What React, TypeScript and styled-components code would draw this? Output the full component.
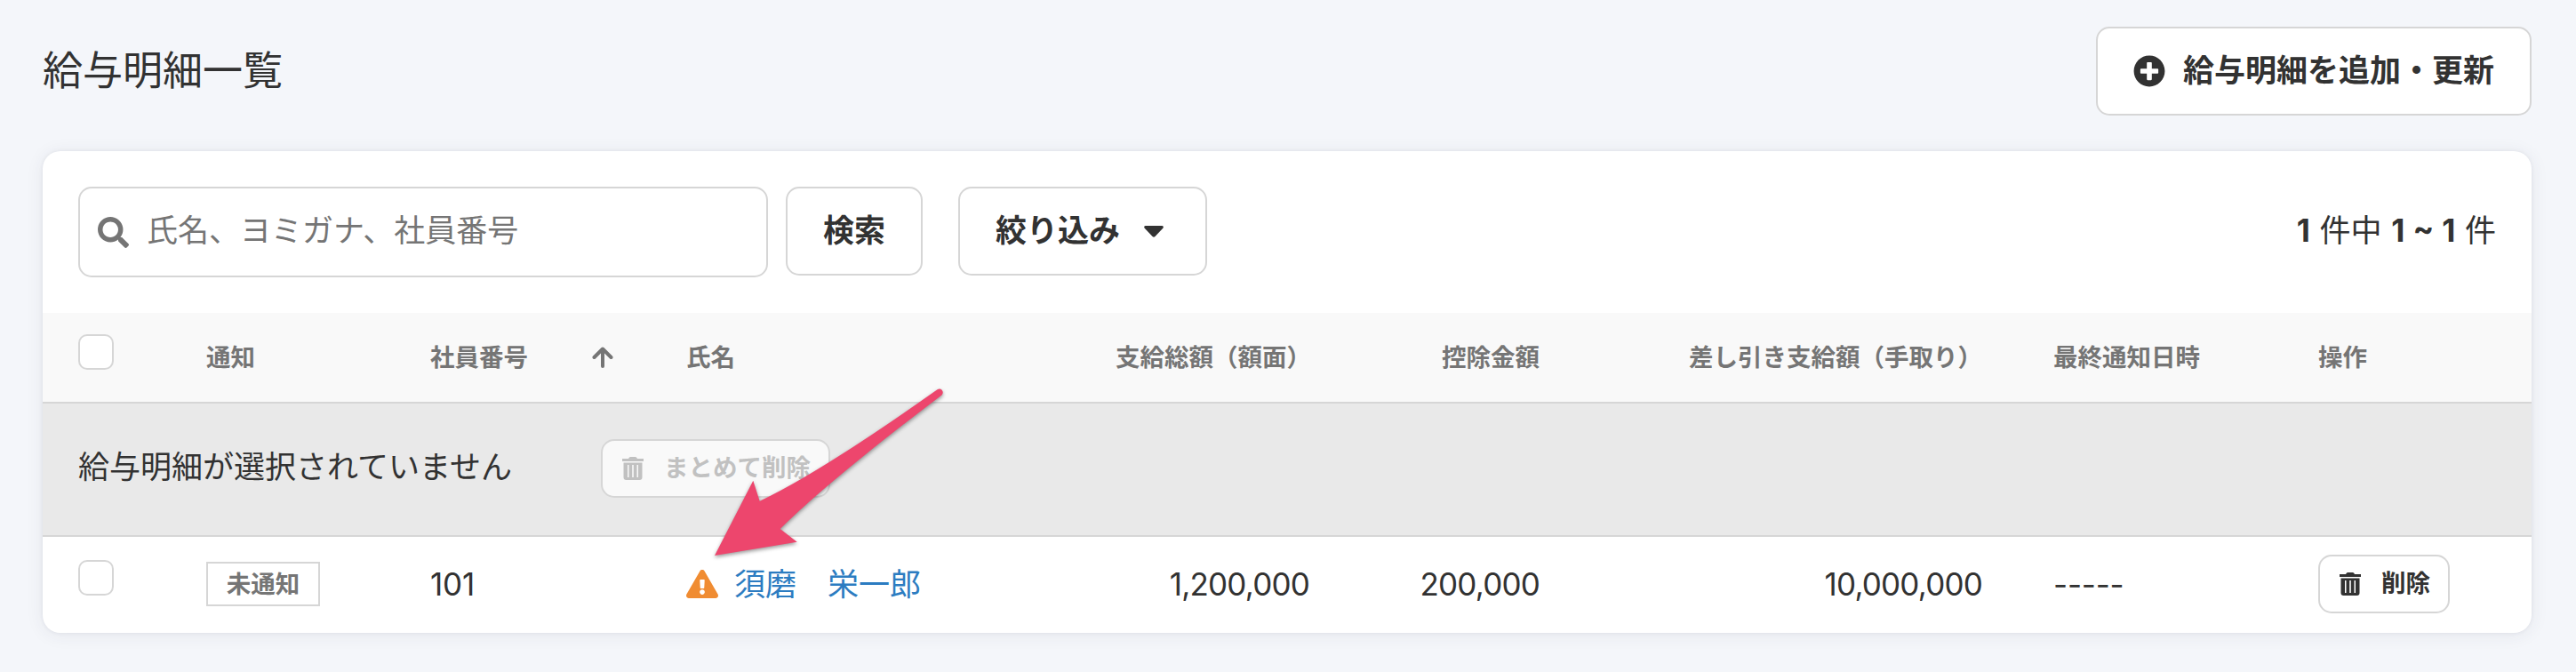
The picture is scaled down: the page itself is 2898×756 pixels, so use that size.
import React from 'react';
import styled, { createGlobalStyle, css } from 'styled-components';
import { FaSearch, FaPlusCircle, FaExclamationTriangle } from 'react-icons/fa';

const Global = createGlobalStyle`
  * { box-sizing: border-box; }
  body {
    margin: 0;
    background: #f4f6fa;
    color: #323232;
    font-family: Inter, "Noto Sans CJK JP", sans-serif;
    font-size: 35px;
    line-height: 50px;
  }
`;

const Page = styled.main`
  position: relative;
  width: 2898px;
  height: 756px;
  padding: 30px 50px 0 48px;
  overflow: hidden;
`;

const PageHeader = styled.header`
  display: flex;
  align-items: center;
  justify-content: space-between;
  height: 100px;
  margin-bottom: 40px;
`;

const Title = styled.h1`
  margin: 0;
  font-size: 45px;
  font-weight: 400;
  line-height: 60px;
`;

const Button = styled.button<{ $small?: boolean; $gap?: number; $end?: number }>`
  display: inline-flex;
  align-items: center;
  gap: ${p => p.$gap ?? 20}px;
  height: 100px;
  padding: 0 ${p => p.$end ?? 40}px 0 40px;
  border: 2px solid #d6d6d6;
  border-radius: 15px;
  background: #fff;
  color: #323232;
  font: inherit;
  font-weight: 700;
  white-space: nowrap;
  ${p =>
    p.$small &&
    css`
      height: 66px;
      padding: 0 20px 0 22px;
      font-size: 27.5px;
      line-height: 40px;
    `}
  &:disabled {
    background: #f9f9f9;
    color: #c1c1c1;
  }
`;

const Label = styled.span<{ $raise?: number }>`
  padding-bottom: ${p => p.$raise ?? 2}px;
`;

const Card = styled.section`
  width: 2800px;
  height: 542px;
  overflow: hidden;
  border-radius: 20px;
  background: #fff;
  box-shadow: 0 0 4px rgba(50, 50, 80, 0.08), 0 2px 20px rgba(50, 50, 80, 0.08);
`;

const Toolbar = styled.div`
  display: flex;
  align-items: flex-start;
  height: 182px;
  padding: 40px 40px 0;
`;

const SearchBox = styled.label`
  display: flex;
  align-items: center;
  width: 776px;
  height: 102px;
  margin-right: 20px;
  padding: 0 20px;
  gap: 20px;
  border: 2px solid #d6d6d6;
  border-radius: 15px;
  color: #757575;
`;

const SearchInput = styled.input`
  flex: 1;
  min-width: 0;
  padding: 0 0 4px;
  border: 0;
  outline: 0;
  background: none;
  font: inherit;
  color: #323232;
  &::placeholder {
    color: #757575;
    opacity: 1;
  }
`;

const FilterSlot = styled.div`
  margin-left: 40px;
`;

const Count = styled.p`
  margin: 24px 0 0 auto;
  word-spacing: 0.8px;
`;

const Table = styled.table`
  width: 2800px;
  table-layout: fixed;
  border-collapse: separate;
  border-spacing: 0;
`;

const Th = styled.th<{ $right?: boolean }>`
  height: 102px;
  padding: 0 40px 1px;
  border-bottom: 2px solid #d6d6d6;
  background: #f9f9f9;
  color: #757575;
  font-size: 27.5px;
  font-weight: 700;
  line-height: 40px;
  text-align: ${p => (p.$right ? 'right' : 'left')};
  white-space: nowrap;
`;

const Td = styled.td<{ $right?: boolean }>`
  height: 108px;
  padding: 0 40px 2px;
  text-align: ${p => (p.$right ? 'right' : 'left')};
  letter-spacing: ${p => (p.$right ? '-0.8px' : '-0.2px')};
  white-space: nowrap;
`;

const BulkCell = styled.td`
  height: 150px;
  padding: 0 40px 2px;
  border-bottom: 2px solid #d6d6d6;
  background: #e9e9e9;
`;

const BulkBar = styled.div`
  display: flex;
  align-items: center;
  gap: 100px;
`;

const Checkbox = styled.span<{ $lift: number }>`
  display: block;
  width: 40px;
  height: 40px;
  margin-bottom: ${p => p.$lift}px;
  border: 2px solid #d6d6d6;
  border-radius: 10px;
  background: #fff;
`;

const Sortable = styled.span`
  display: flex;
  align-items: center;
  gap: 72px;
`;

const Tag = styled.span`
  display: block;
  width: 128px;
  height: 50px;
  border: 2px solid #d6d6d6;
  color: #757575;
  font-size: 27.5px;
  font-weight: 700;
  line-height: 46px;
  letter-spacing: 0;
  text-align: center;
`;

const Name = styled.div`
  display: flex;
  align-items: center;
  gap: 18px;
  letter-spacing: 0;
`;

const NameLink = styled.a`
  padding-bottom: 1px;
  color: #2c7cc1;
`;

const Pointer = styled.svg`
  position: absolute;
  left: 790px;
  top: 420px;
  filter: drop-shadow(0 2px 2px rgba(0, 0, 0, 0.4));
`;

const TrashIcon = () => (
  <svg width="24" height="26" viewBox="0 0 24 26" fill="currentColor">
    <path d="M0 2h7l1-1.4Q8.500 0 9.200 0h5.600q.7 0 1.200.6L17 2h7v3H0z" />
    <path
      fillRule="evenodd"
      d="M1.500 6.500h21V23q0 3-3 3h-15q-3 0-3-3zM6 9v14h1.500V9zM11.200 9v14h1.600V9zM16.500 9v14H18V9z"
    />
  </svg>
);

const CaretIcon = () => (
  <svg width="22" height="13" viewBox="0 0 22 13" fill="currentColor">
    <path d="M1.500 0h19q2 .6 1 2.400L12.500 12q-1.500 1.600-3 0L.5 2.400Q-.5.600 1.500 0z" />
  </svg>
);

const SortIcon = () => (
  <svg width="24" height="24" viewBox="0 0 24 24" fill="none" stroke="currentColor" strokeWidth="4" strokeLinecap="round" strokeLinejoin="round">
    <path d="M12 22V3M2.500 12 12 2.500 21.500 12" />
  </svg>
);

const columns = [144, 252, 288, 483, 298, 259, 498, 298, 280];

export default function App() {
  return (
    <Page>
      <Global />
      <PageHeader>
        <Title>給与明細一覧</Title>
        <Button>
          <FaPlusCircle size={36} />
          <Label>給与明細を追加・更新</Label>
        </Button>
      </PageHeader>
      <Card>
        <Toolbar>
          <SearchBox>
            <FaSearch size={35} />
            <SearchInput placeholder="氏名、ヨミガナ、社員番号" />
          </SearchBox>
          <Button>
            <Label>検索</Label>
          </Button>
          <FilterSlot>
            <Button $gap={27} $end={47}>
              <Label>絞り込み</Label>
              <CaretIcon />
            </Button>
          </FilterSlot>
          <Count>
            <b>1</b> 件中 <b>1 ~ 1</b> 件
          </Count>
        </Toolbar>
        <Table>
          <colgroup>
            {columns.map((w, i) => (
              <col key={i} width={w} />
            ))}
          </colgroup>
          <thead>
            <tr>
              <Th><Checkbox $lift={11} /></Th>
              <Th>通知</Th>
              <Th>
                <Sortable>
                  社員番号
                  <SortIcon />
                </Sortable>
              </Th>
              <Th>氏名</Th>
              <Th $right>支給総額（額面）</Th>
              <Th $right>控除金額</Th>
              <Th $right>差し引き支給額（手取り）</Th>
              <Th>最終通知日時</Th>
              <Th>操作</Th>
            </tr>
          </thead>
          <tbody>
            <tr>
              <BulkCell colSpan={9}>
                <BulkBar>
                  <Label $raise={4}>給与明細が選択されていません</Label>
                  <Button $small $gap={23} disabled>
                    <TrashIcon />
                    <Label $raise={3}>まとめて削除</Label>
                  </Button>
                </BulkBar>
              </BulkCell>
            </tr>
            <tr>
              <Td><Checkbox $lift={14} /></Td>
              <Td><Tag>未通知</Tag></Td>
              <Td>101</Td>
              <Td>
                <Name>
                  <FaExclamationTriangle size={36} color="#f08c32" />
                  <NameLink>須磨　栄一郎</NameLink>
                </Name>
              </Td>
              <Td $right>1,200,000</Td>
              <Td $right>200,000</Td>
              <Td $right>10,000,000</Td>
              <Td>-----</Td>
              <Td>
                <Button $small $gap={23}>
                  <TrashIcon />
                  <Label $raise={3}>削除</Label>
                </Button>
              </Td>
            </tr>
          </tbody>
        </Table>
      </Card>
      <Pointer width="290" height="220" viewBox="790 420 290 220">
        <path
          fill="#ed466d"
          d="M804 625 847.300 540.700 854.700 563.700Q922 532 1054.500 438.300C1058.500 435.500 1063 440.500 1059.500 444.500Q932 541 877.700 595L896.700 609.700z"
        />
      </Pointer>
    </Page>
  );
}
